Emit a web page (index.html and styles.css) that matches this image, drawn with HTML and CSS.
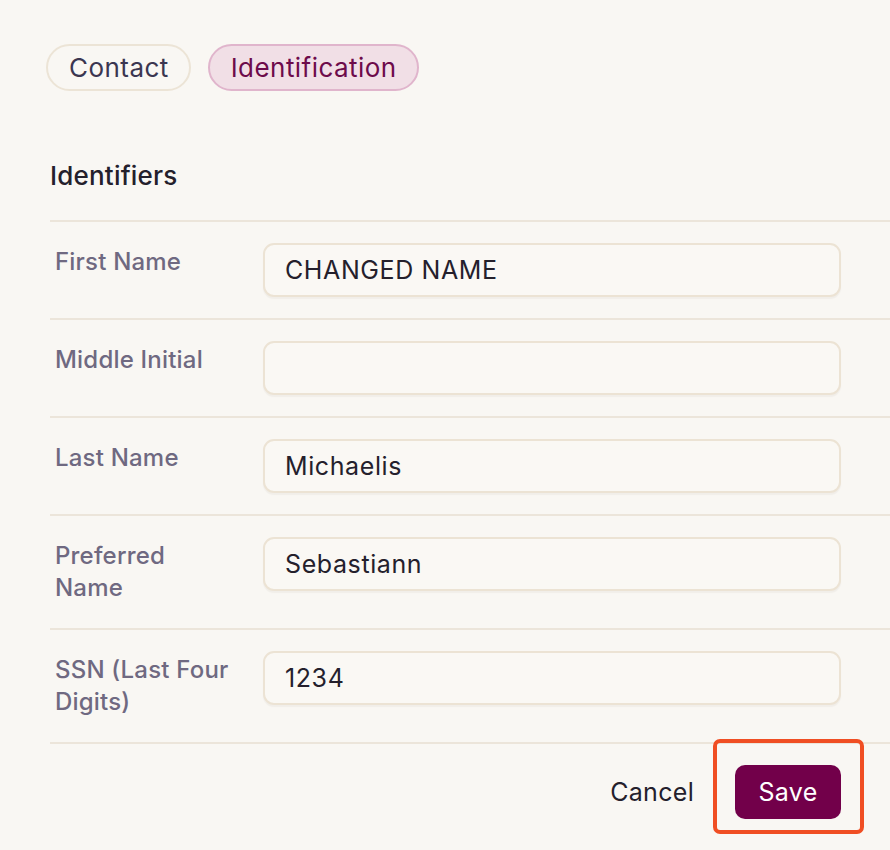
FILE: index.html
```html
<!DOCTYPE html>
<html lang="en">
<head>
<meta charset="utf-8">
<title>Identification</title>
<link rel="stylesheet" href="styles.css">
</head>
<body>
<div class="page">
  <nav class="tabs">
    <button class="tab">Contact</button>
    <button class="tab tab-active">Identification</button>
  </nav>
  <section class="section">
    <h2 class="section-title">Identifiers</h2>
    <div class="rows">
      <div class="row">
        <label class="label">First Name</label>
        <div class="input">CHANGED NAME</div>
      </div>
      <div class="row">
        <label class="label">Middle Initial</label>
        <div class="input"></div>
      </div>
      <div class="row">
        <label class="label">Last Name</label>
        <div class="input">Michaelis</div>
      </div>
      <div class="row">
        <label class="label">Preferred Name</label>
        <div class="input">Sebastiann</div>
      </div>
      <div class="row">
        <label class="label">SSN (Last Four Digits)</label>
        <div class="input">1234</div>
      </div>
    </div>
    <div class="footer">
      <button class="btn-cancel">Cancel</button>
      <div class="save-wrap">
        <button class="btn-save">Save</button>
        <div class="highlight"></div>
      </div>
    </div>
  </section>
</div>
</body>
</html>
```
FILE: styles.css
```css
* { box-sizing: border-box; }
html, body {
  margin: 0;
  background: #f9f7f3;
}
body {
  font-family: "Inter", "Open Sans", sans-serif;
  color: #24202c;
}
.page {
  padding: 44px 0 31px 46px;
  min-height: 850px;
}
.tabs {
  display: flex;
  gap: 17px;
}
.tab {
  font: inherit;
  font-size: 26px;
  height: 47px;
  padding: 0 20px 0 21px;
  border-radius: 24px;
  border: 2px solid #ece4d6;
  background: #f9f7f3;
  color: #3b3651;
  letter-spacing: 0.45px;
  line-height: 1;
}
.tab-active {
  background: #f1dfe6;
  border-color: #e0b5cc;
  color: #6d0b4b;
}
.section {
  padding-left: 4px;
  margin-top: 69px;
}
.section-title {
  margin: 0;
  font-size: 26px;
  font-weight: 500;
  line-height: 32px;
  letter-spacing: 0.2px;
  padding-bottom: 28px;
  border-bottom: 2px solid #ece5da;
}
.row {
  display: flex;
  align-items: flex-start;
  padding: 21px 49px 21px 5px;
  border-bottom: 2px solid #ece5da;
}
.label {
  width: 208px;
  flex: none;
  padding: 3px 24px 3px 0;
  font-size: 24px;
  line-height: 32px;
  letter-spacing: 0.2px;
  color: #6f6981;
  font-weight: 500;
}
.input {
  flex: 1;
  height: 54px;
  border: 2px solid #ece3d4;
  border-radius: 11px;
  background: #faf8f4;
  box-shadow: 0 2px 1px rgba(120, 100, 80, 0.06);
  padding: 0 20px;
  display: flex;
  align-items: center;
  font-size: 25px;
  letter-spacing: 0.6px;
  color: #24202c;
}
.footer {
  display: flex;
  justify-content: flex-end;
  align-items: center;
  gap: 41px;
  padding: 21px 49px 0 0;
}
.btn-cancel {
  font: inherit;
  font-size: 25px;
  border: none;
  background: none;
  color: #24202c;
  letter-spacing: 0.3px;
  padding: 0;
}
.save-wrap {
  position: relative;
}
.btn-save {
  display: block;
  font: inherit;
  font-size: 25px;
  width: 106px;
  height: 54px;
  border: none;
  border-radius: 10px;
  background: #72004a;
  color: #ffffff;
  letter-spacing: 0.3px;
}
.highlight {
  position: absolute;
  top: -26px;
  bottom: -15px;
  left: -22px;
  right: -23px;
  border: 4px solid #f04e23;
  border-radius: 7px;
  pointer-events: none;
}
```
